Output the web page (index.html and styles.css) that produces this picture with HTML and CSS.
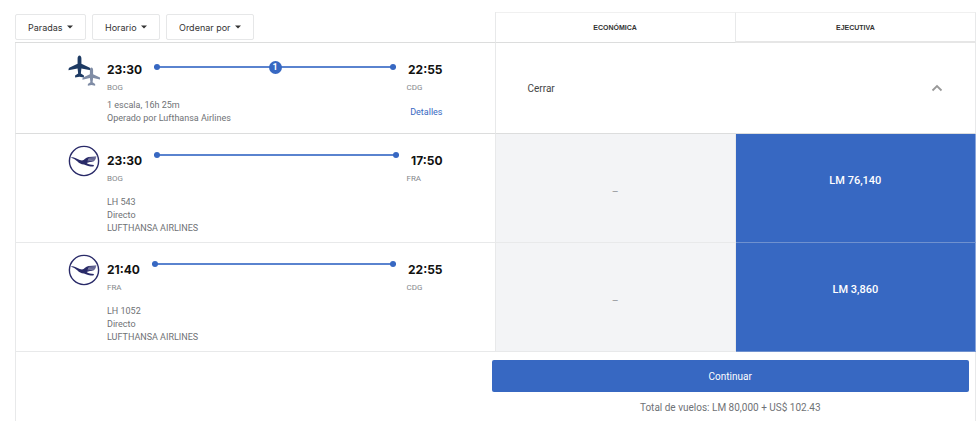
FILE: index.html
```html
<!DOCTYPE html>
<html lang="es">
<head>
    <meta charset="UTF-8">
    <meta name="viewport" content="width=device-width, initial-scale=1.0">
    <title>Vuelos</title>
    <link rel="stylesheet" href="styles.css">
</head>
<body>

    <!-- Airline logo shared by the flight legs -->
    <svg class="sprite" aria-hidden="true">
        <symbol id="crane" viewBox="0 0 32 32">
            <circle cx="16" cy="16" r="14.6" fill="none" stroke="#292a68" stroke-width="1.4"/>
            <path fill="#292a68" d="M2.5 12.5 L5 12.2 C8 13 11 15 14 15.6 C16.5 15.2 17.5 12.6 20.5 12 L28.5 11.4 L28 12.6 L27.6 13.8 L27 15 L25.8 16.2 C23 16.8 20.5 17.2 18.6 18 C20.5 19.6 23 19.9 26 20 L25.4 21.6 C21.5 21.6 18.5 20.6 16 19.4 C13 19.4 11.2 18 9.5 16.4 C7.4 14.6 5.2 13.4 2.5 12.5 Z"/>
            <path fill="none" stroke="#fff" stroke-width="0.4" d="M20.5 13.3 L28.2 12.6 M20 14.6 L27.6 13.9 M19.6 15.9 L26.8 15.1"/>
        </symbol>
        <symbol id="plane" viewBox="0 0 24 24">
            <path d="M12 0.5 C13.2 0.5 14 2 14 3.6 V9 L22.8 13.4 Q23.5 14 23.5 16 L14 14 L13.4 19.4 L16.6 21.4 V23.6 L12 22.8 L7.4 23.6 V21.4 L10.6 19.4 L10 14 L0.5 16 Q0.5 14 1.2 13.4 L10 9 V3.6 C10 2 10.8 0.5 12 0.5 Z"/>
        </symbol>
    </svg>

    <table class="flights">
        <thead>
            <tr>
                <th class="filters-cell">
                    <div class="filters">
                        <select class="filter" aria-label="Paradas">
                            <option>Paradas</option>
                        </select>
                        <select class="filter" aria-label="Horario">
                            <option>Horario</option>
                        </select>
                        <select class="filter" aria-label="Ordenar por">
                            <option>Ordenar por</option>
                        </select>
                    </div>
                </th>
                <th class="cabin" scope="col">ECONÓMICA</th>
                <th class="cabin active" scope="col">EJECUTIVA</th>
            </tr>
        </thead>
        <tbody>
            <tr class="summary">
                <td>
                    <div class="flight">
                        <svg class="logo" viewBox="0 0 32 32" aria-hidden="true">
                            <use href="#plane" x="0" y="1" width="23" height="23" fill="#1d3a63"/>
                            <use href="#plane" x="14" y="13" width="19" height="19" fill="#7f8ca5"/>
                        </svg>
                        <div class="flight-body">
                            <div class="route">
                                <span class="time">23:30</span>
                                <span class="line"><span class="stops">1</span></span>
                                <span class="time">22:55</span>
                            </div>
                            <div class="airports">
                                <span>BOG</span>
                                <span class="arrival">CDG</span>
                            </div>
                            <div class="info">
                                <p>1 escala, 16h 25m<br>Operado por Lufthansa Airlines</p>
                                <a class="details" href="#">Detalles</a>
                            </div>
                        </div>
                    </div>
                </td>
                <td class="toggle-cell" colspan="2">
                    <button class="toggle" type="button">
                        Cerrar
                        <svg class="chevron" viewBox="0 0 12 8" aria-hidden="true">
                            <path d="M1.5 6.5 L6 2 L10.5 6.5" fill="none" stroke="#999" stroke-width="1.8"/>
                        </svg>
                    </button>
                </td>
            </tr>
            <tr class="leg">
                <td>
                    <div class="flight">
                        <svg class="logo" aria-hidden="true"><use href="#crane"/></svg>
                        <div class="flight-body">
                            <div class="route">
                                <span class="time">23:30</span>
                                <span class="line"></span>
                                <span class="time">17:50</span>
                            </div>
                            <div class="airports">
                                <span>BOG</span>
                                <span class="arrival">FRA</span>
                            </div>
                            <div class="info">
                                <p>LH 543<br>Directo<br>LUFTHANSA AIRLINES</p>
                            </div>
                        </div>
                    </div>
                </td>
                <td class="unavailable">—</td>
                <td class="selected"><button class="price" type="button">LM 76,140</button></td>
            </tr>
            <tr class="leg">
                <td>
                    <div class="flight">
                        <svg class="logo" aria-hidden="true"><use href="#crane"/></svg>
                        <div class="flight-body">
                            <div class="route">
                                <span class="time">21:40</span>
                                <span class="line"></span>
                                <span class="time">22:55</span>
                            </div>
                            <div class="airports">
                                <span>FRA</span>
                                <span class="arrival">CDG</span>
                            </div>
                            <div class="info">
                                <p>LH 1052<br>Directo<br>LUFTHANSA AIRLINES</p>
                            </div>
                        </div>
                    </div>
                </td>
                <td class="unavailable">—</td>
                <td class="selected"><button class="price" type="button">LM 3,860</button></td>
            </tr>
        </tbody>
    </table>

    <div class="footer">
        <div class="checkout">
            <button class="continue" type="button">Continuar</button>
            <p class="total">Total de vuelos: LM 80,000 + US$ 102.43</p>
        </div>
    </div>

</body>
</html>
```
FILE: styles.css
```css
* {
    box-sizing: border-box;
}
body {
    display: flex;
    flex-direction: column;
    min-height: 100vh;
    margin: 0;
    padding: 12px 3px 0 15px;
    font-family: Roboto, Arial, sans-serif;
    font-size: 9px;
    color: #6f7276;
    background: #fff;
}
p {
    margin: 0;
}
button, select {
    font-family: inherit;
    cursor: pointer;
}
.sprite {
    position: absolute;
    width: 0;
    height: 0;
}

/* Table */
.flights {
    width: 100%;
    table-layout: fixed;
    border-collapse: separate;
    border-spacing: 0;
}
.flights th, .flights td {
    padding: 0;
    vertical-align: top;
    border-right: 1px solid #e8e9ea;
    border-bottom: 1px solid #e8e9ea;
}
.flights td:first-child {
    border-left: 1px solid #e8e9ea;
}
.flights .filters-cell {
    width: 50%;
    border-bottom-color: #dcdddd;
}
.flights .cabin {
    height: 31px;
    border-top: 1px solid #f0f0f0;
    border-bottom-color: #dcdddd;
    vertical-align: middle;
    font-family: "Liberation Sans", Arial, sans-serif;
    font-size: 7px;
    color: #333;
}
.flights .active {
    border-bottom: 2px solid #e6e6e6;
}
.flights .summary td {
    border-bottom-color: #dcdddd;
}

/* Filters */
.filters {
    display: flex;
    gap: 6px;
    padding: 2px 0;
}
.filter {
    height: 26px;
    padding: 0 22px 0 12px;
    border: 1px solid #e6e7e8;
    border-radius: 2px;
    appearance: none;
    font-family: Inter, Arial, sans-serif;
    font-size: 9px;
    color: #333;
    background: #fff url("data:image/svg+xml,%3Csvg xmlns='http://www.w3.org/2000/svg' width='6' height='4'%3E%3Cpath d='M0 .5h6L3 3.5z' fill='%23333'/%3E%3C/svg%3E") no-repeat right 12px center;
}

/* Flight */
.flight {
    display: flex;
    gap: 7px;
    padding: 11px 52px 0;
}
.logo {
    flex: none;
    width: 32px;
    height: 32px;
}
.flight-body {
    flex: 1;
    padding-top: 7px;
}
.route {
    display: flex;
    gap: 12px;
    line-height: 18px;
}
.time {
    font-family: Inter, Arial, sans-serif;
    font-size: 12px;
    font-weight: bold;
    color: #111;
}
.line {
    display: flex;
    flex: 1;
    align-items: center;
    justify-content: space-between;
    height: 12px;
    background: linear-gradient(#5a83cf, #5a83cf) center / 100% 2px no-repeat;
}
.line::before, .line::after {
    content: "";
    width: 6px;
    height: 6px;
    border-radius: 50%;
    background: #3768c2;
}
.leg .line {
    height: 6px;
}
.stops {
    width: 13px;
    height: 13px;
    border-radius: 50%;
    font-size: 9px;
    font-weight: bold;
    line-height: 13px;
    text-align: center;
    color: #fff;
    background: #3768c2;
}
.airports {
    display: flex;
    justify-content: space-between;
    margin-top: 4px;
    font-size: 8px;
    line-height: 10px;
    color: #85888c;
}
.arrival {
    width: 36px;
}
.info {
    display: flex;
    align-items: center;
    justify-content: space-between;
    padding: 6px 0 8px;
    line-height: 13px;
}
.leg .info {
    padding: 12px 0 7px;
}
.details {
    color: #3768c2;
    text-decoration: none;
}

/* Fares */
.flights .toggle-cell {
    vertical-align: middle;
}
.toggle {
    display: flex;
    align-items: center;
    justify-content: space-between;
    width: 100%;
    padding: 8px 32px;
    border: none;
    font-size: 10px;
    color: #444;
    background: none;
}
.chevron {
    width: 12px;
    height: 8px;
}
.flights .unavailable {
    padding-top: 6px;
    vertical-align: middle;
    text-align: center;
    font-size: 8px;
    background: #f3f4f6;
}
.flights .selected {
    border-right-color: #8aa6dc;
    border-bottom-color: #6f91cf;
    background: #3768c2;
}
.price {
    width: 100%;
    padding: 40px 0;
    border: none;
    font-size: 11px;
    font-weight: 500;
    color: #fff;
    background: none;
}

/* Footer */
.footer {
    flex: 1;
    display: flex;
    justify-content: flex-end;
    padding: 8px 6px 0;
    border: solid #e8e9ea;
    border-width: 0 1px;
}
.checkout {
    width: calc(50% + 4px);
    min-width: 240px;
    text-align: center;
}
.continue {
    width: 100%;
    height: 32px;
    border: none;
    border-radius: 2px;
    font-size: 10px;
    color: #fff;
    background: #3768c2;
}
.total {
    margin-top: 9px;
    font-size: 10px;
    line-height: 14px;
}
```
